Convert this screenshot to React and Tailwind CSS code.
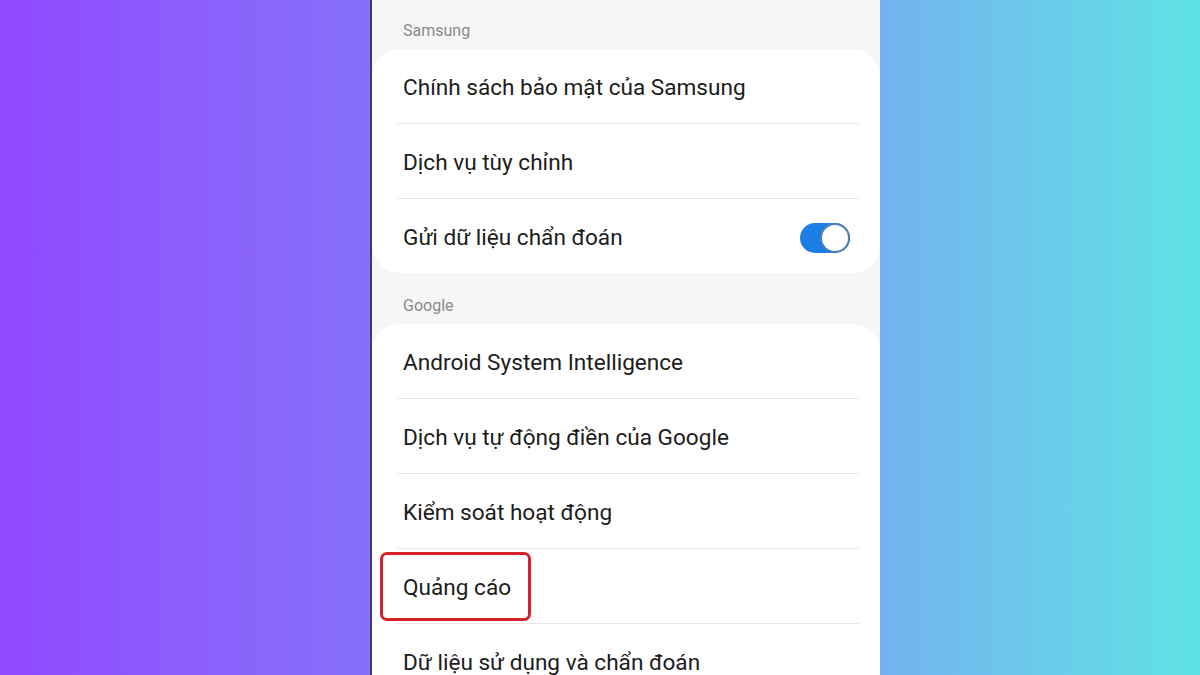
const samsung = [
  { label: 'Chính sách bảo mật của Samsung' },
  { label: 'Dịch vụ tùy chỉnh' },
  { label: 'Gửi dữ liệu chẩn đoán', toggle: true },
];

const google = [
  { label: 'Android System Intelligence' },
  { label: 'Dịch vụ tự động điền của Google' },
  { label: 'Kiểm soát hoạt động' },
  { label: 'Quảng cáo', marked: true },
  { label: 'Dữ liệu sử dụng và chẩn đoán' },
];

function Toggle() {
  return (
    <div className="relative w-[50px] h-[30px] rounded-full bg-[#1d7fe6]">
      <div className="absolute right-0 top-0 w-[30px] h-[30px] rounded-full bg-white border-2 border-[#4a7fb5]" />
    </div>
  );
}

function Row({ item, last }) {
  return (
    <div className="relative">
      <div className="h-[74px] pt-[3px] flex items-center justify-between pl-[31px] pr-[30px]">
        <span className="text-[22.6px] text-[#1c1c1c] whitespace-nowrap">{item.label}</span>
        {item.toggle && <Toggle />}
      </div>
      {item.marked && (
        <div className="absolute left-[8px] top-[3px] w-[151px] h-[69px] rounded-[7px] border-[3px] border-[#d3222c]" />
      )}
      {!last && <div className="ml-[25px] mr-[21px] h-px bg-[#e6e6e6]" />}
    </div>
  );
}

function Section({ title, items, top, bottom }) {
  return (
    <div>
      <div className={`pl-[31px] ${top} ${bottom} text-[16px] leading-[24px] text-[#8a8a8a]`}>{title}</div>
      <div className="bg-white rounded-[28px]">
        {items.map((item, i) => (
          <Row key={item.label} item={item} last={i === items.length - 1} />
        ))}
      </div>
    </div>
  );
}

export default function App() {
  return (
    <div
      className="w-[1200px] h-[675px] overflow-hidden flex bg-gradient-to-r from-[#9147ff] via-[#7c85f6] to-[#5ee2e4]"
      style={{ fontFamily: 'Roboto, "Noto Sans", sans-serif' }}
    >
      <div className="w-[370px] shrink-0" />
      <div className="w-[510px] shrink-0 h-full bg-[#f6f6f6] border-l-2 border-[#3b3d6e] overflow-hidden">
        <Section title="Samsung" items={samsung} top="pt-[19px]" bottom="pb-[6px]" />
        <Section title="Google" items={google} top="pt-[21px]" bottom="pb-[6px]" />
      </div>
    </div>
  );
}
